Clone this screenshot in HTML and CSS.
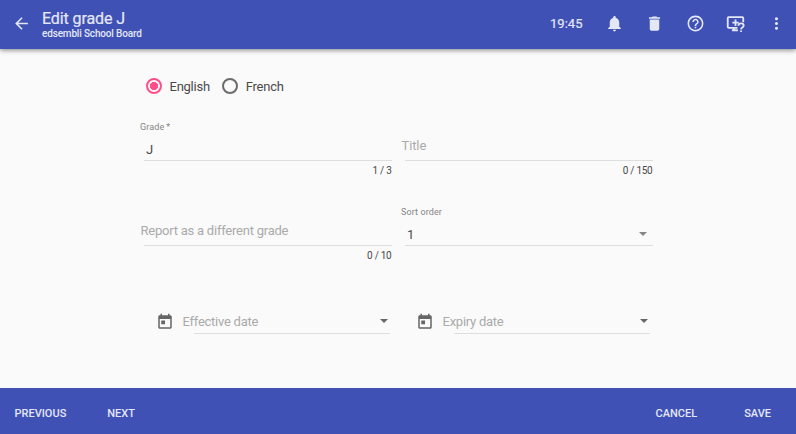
FILE: index.html
```html
<!DOCTYPE html>
<html lang="en">
<head>
<meta charset="utf-8">
<title>Edit grade J</title>
<link rel="stylesheet" href="styles.css">
</head>
<body>
<header class="toolbar">
  <svg class="icon back" viewBox="0 0 24 24"><path d="M20 11H7.83l5.59-5.59L12 4l-8 8 8 8 1.41-1.41L7.83 13H20v-2z"/></svg>
  <div class="heading">
    <h1>Edit grade J</h1>
    <p>edsembli School Board</p>
  </div>
  <span class="clock">19:45</span>
  <nav class="actions">
    <svg class="icon" viewBox="0 0 24 24"><path d="M12 22c1.1 0 2-.9 2-2h-4c0 1.1.89 2 2 2zm6-6v-5c0-3.07-1.64-5.64-4.5-6.32V4c0-.83-.67-1.5-1.5-1.5s-1.5.67-1.5 1.5v.68C7.63 5.36 6 7.92 6 11v5l-2 2v1h16v-1l-2-2z"/></svg>
    <svg class="icon" viewBox="0 0 24 24"><path d="M6 19c0 1.100.9 2 2 2h8c1.100 0 2-.9 2-2V7H6v12zM19 4h-3.500l-1-1h-5l-1 1H5v2h14V4z"/></svg>
    <svg class="icon" viewBox="0 0 24 24"><path d="M11 18h2v-2h-2v2zm1-16C6.480 2 2 6.480 2 12s4.480 10 10 10 10-4.480 10-10S17.520 2 12 2zm0 18c-4.410 0-8-3.590-8-8s3.590-8 8-8 8 3.590 8 8-3.590 8-8 8zm0-14c-2.210 0-4 1.790-4 4h2c0-1.100.9-2 2-2s2 .9 2 2c0 2-3 1.750-3 5h2c0-2.250 3-2.500 3-5 0-2.210-1.790-4-4-4z"/></svg>
    <svg class="icon stroked" viewBox="0 0 24 24"><path d="M14.500 17.500H3.500Q2.200 17.500 2.200 16.200V5.300Q2.200 4 3.500 4H20.500Q21.800 4 21.800 5.300V10.500M7.500 20.500H15M10 17.500V20.500M12 7V15M8 11H16"/><path d="M15.700 14.800C15.700 11 22.300 11 22.300 14.800C22.300 17.200 19 17 19 19.500M19 20.700V22.800"/></svg>
    <svg class="icon" viewBox="0 0 24 24"><path d="M12 8c1.100 0 2-.9 2-2s-.9-2-2-2-2 .9-2 2 .9 2 2 2zm0 2c-1.100 0-2 .9-2 2s.9 2 2 2 2-.9 2-2-.9-2-2-2zm0 6c-1.100 0-2 .9-2 2s.9 2 2 2 2-.9 2-2-.9-2-2-2z"/></svg>
  </nav>
</header>
<main class="form">
  <div class="languages">
    <label class="option"><i class="radio checked"></i>English</label>
    <label class="option french"><i class="radio"></i>French</label>
  </div>
  <div class="fields">
    <div class="field">
      <span class="label">Grade<span class="star">*</span></span>
      <div class="control value">J</div>
      <span class="count">1 / 3</span>
    </div>
    <div class="field">
      <span class="label"></span>
      <div class="control"><span class="placeholder title">Title</span></div>
      <span class="count">0 / 150</span>
    </div>
    <div class="field">
      <span class="label"></span>
      <div class="control"><span class="placeholder">Report as a different grade</span></div>
      <span class="count">0 / 10</span>
    </div>
    <div class="field">
      <span class="label">Sort order</span>
      <div class="control value">1<i class="caret soft"></i></div>
    </div>
  </div>
  <div class="dates">
    <div class="date">
      <svg class="calendar" viewBox="0 0 24 24"><path d="M19 3h-1V1h-2v2H8V1H6v2H5c-1.110 0-1.990.9-1.990 2L3 19c0 1.100.89 2 2 2h14c1.100 0 2-.9 2-2V5c0-1.100-.9-2-2-2zm0 16H5V8h14v11zM7 10h5v5H7z"/></svg>
      <div class="picker"><span>Effective date</span><i class="caret"></i></div>
    </div>
    <div class="date">
      <svg class="calendar" viewBox="0 0 24 24"><path d="M19 3h-1V1h-2v2H8V1H6v2H5c-1.110 0-1.990.9-1.990 2L3 19c0 1.100.89 2 2 2h14c1.100 0 2-.9 2-2V5c0-1.100-.9-2-2-2zm0 16H5V8h14v11zM7 10h5v5H7z"/></svg>
      <div class="picker"><span>Expiry date</span><i class="caret"></i></div>
    </div>
  </div>
</main>
<footer class="footer">
  <span class="previous">PREVIOUS</span>
  <span>NEXT</span>
  <span class="cancel">CANCEL</span>
  <span>SAVE</span>
</footer>
</body>
</html>
```
FILE: styles.css
```css
* { box-sizing: border-box; }
body {
  margin: 0;
  height: 434px;
  display: flex;
  flex-direction: column;
  overflow: hidden;
  background: #fafafa;
  color: #4a4a4a;
  font-family: Roboto, sans-serif;
  font-size: 13px;
}
.toolbar {
  height: 49px;
  flex: none;
  display: flex;
  align-items: center;
  padding: 0 10.500px 2px 12px;
  background: #3f51b5;
  color: #e4e7f6;
  box-shadow: 0 1px 5px rgba(0, 0, 0, .5);
}
.icon { width: 19px; height: 19px; flex: none; fill: currentColor; }
.stroked { fill: none; stroke: currentColor; stroke-width: 2.300; }
.heading { margin-left: 11px; padding-top: 3px; }
h1 { margin: 0; font-size: 16px; line-height: 17px; font-weight: 400; letter-spacing: -.1px; -webkit-text-stroke: .2px; }
.heading p { margin: 0; font-size: 10px; line-height: 13px; font-weight: 500; letter-spacing: -.16px; }
.clock { margin-left: auto; margin-right: 22.500px; font-size: 13px; -webkit-text-stroke: .2px; }
.actions { display: flex; gap: 21.400px; }
.form { flex: 1; padding: 25px 143px 0 140px; }
.languages { display: flex; height: 24px; align-items: center; padding-left: 5.500px; }
.option { display: flex; align-items: center; gap: 8px; letter-spacing: -.25px; }
.french { margin-left: 12px; }
.radio {
  width: 16px;
  height: 16px;
  border: 2px solid #6c6c6c;
  border-radius: 50%;
}
.checked {
  border-color: #ff4f8b;
  background: radial-gradient(circle, #ff4f8b 3.800px, transparent 4.400px);
}
.fields {
  display: grid;
  grid-template-columns: 252px 252px;
  column-gap: 9px;
  grid-auto-rows: 85px;
  margin-top: 21px;
}
.field { display: flex; flex-direction: column; }
.label { height: 15px; font-size: 9px; line-height: 17px; color: #858585; letter-spacing: .1px; }
.star { margin-left: 2px; }
.control {
  height: 27px;
  display: flex;
  align-items: center;
  margin-left: 4px;
  border-bottom: 1px solid #dedede;
}
.value { padding: 5px 0 0 2px; }
.placeholder { margin: 0 0 3px -3.500px; color: #aaa; letter-spacing: -.23px; }
.title { letter-spacing: -.1px; }
.count { align-self: flex-end; font-size: 10px; line-height: 20px; letter-spacing: -.25px; color: #484848; margin-right: .5px; }
.caret {
  margin-left: auto;
  border: 4px solid transparent;
  border-top-color: #666;
  border-bottom: 0;
}
.soft { border-top-color: #858585; margin: 0 6px 1px auto; }
.dates { display: grid; grid-template-columns: 234px 234px; column-gap: 26px; margin: 19px 0 0 16px; }
.date { display: flex; align-items: flex-start; }
.calendar { width: 18px; height: 18px; fill: #666; margin-top: 5px; }
.picker {
  height: 26px;
  flex: 1;
  display: flex;
  align-items: center;
  padding: 0 2px 0 8.500px;
  color: #aaa;
  letter-spacing: -.25px;
  background: linear-gradient(#dedede, #dedede) right bottom / 196px 1px no-repeat;
}
.footer {
  height: 46px;
  flex: none;
  display: flex;
  align-items: center;
  padding: 4px 25px 0 14.500px;
  background: #3f51b5;
  color: #e4e7f6;
  font-size: 11px;
  font-weight: 500;
}
.previous { margin-right: 41px; }
.cancel { margin: 0 47px 0 auto; }
```
